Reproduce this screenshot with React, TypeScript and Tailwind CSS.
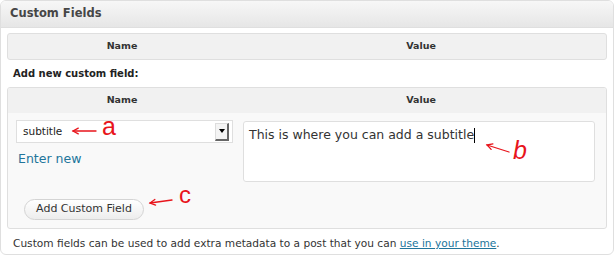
import React from "react";

const font = { fontFamily: '"DejaVu Sans", "Lucida Grande", Verdana, sans-serif' };

function Arrow({ x1, y1, x2, y2 }: { x1: number; y1: number; x2: number; y2: number }) {
  const ang = Math.atan2(y2 - y1, x2 - x1);
  const len = 6;
  const spread = 0.5;
  const ax = x1 + len * Math.cos(ang + spread);
  const ay = y1 + len * Math.sin(ang + spread);
  const bx = x1 + len * Math.cos(ang - spread);
  const by = y1 + len * Math.sin(ang - spread);
  return (
    <g stroke="#e8141b" strokeWidth={1.3} fill="none" strokeLinecap="round">
      <line x1={x1} y1={y1} x2={x2} y2={y2} />
      <polyline points={`${ax},${ay} ${x1},${y1} ${bx},${by}`} />
    </g>
  );
}

export default function App() {
  return (
    <div className="relative w-[614px] h-[256px] bg-white" style={font}>
      <div className="w-[614px] h-[255px] border border-[#dfdfdf] rounded-[6px] overflow-hidden flex flex-col bg-white">
        <div className="h-[27px] shrink-0 bg-gradient-to-b from-[#f7f7f7] to-[#e6e6e6] border-b border-[#dfdfdf] pl-[9px] flex items-center text-[11.5px] font-bold text-[#464646]">
          Custom Fields
        </div>
        <div className="px-[6px] pt-[5px]">
          <div className="h-[27px] rounded-[3px] border border-[#dfdfdf] bg-[#f1f1f1] flex items-center text-[9.5px] font-bold text-[#333]">
            <div className="w-[228px] text-center">Name</div>
            <div className="flex-1 text-center">Value</div>
          </div>
          <div className="h-[27px] flex items-center pl-[6px] text-[10px] font-bold text-[#222]">
            Add new custom field:
          </div>
          <div className="rounded-[3px] border border-[#dfdfdf] bg-[#f9f9f9] overflow-hidden">
            <div className="h-[25px] bg-[#f1f1f1] flex items-center text-[9.5px] font-bold text-[#333]">
              <div className="w-[228px] text-center">Name</div>
              <div className="flex-1 text-center">Value</div>
            </div>
            <div className="flex h-[115px]">
              <div className="w-[228px] pl-[8px] pt-[7px] flex flex-col">
                <div className="w-[217px] h-[23px] bg-white border border-[#dfdfdf] flex items-center pl-[6px] text-[10.5px] text-[#222]">
                  <span className="flex-1">subtitle</span>
                  <div className="w-[14px] h-[18px] mr-[3px] bg-[#f4f4f4] border-r-2 border-b-2 border-r-[#666] border-b-[#666] border-l border-t border-l-[#ddd] border-t-[#ddd] flex items-center justify-center">
                    <div className="w-0 h-0 border-l-[3px] border-r-[3px] border-t-[4px] border-l-transparent border-r-transparent border-t-black" />
                  </div>
                </div>
                <div className="mt-[8px] pl-[2px] text-[12.5px] text-[#21759b] leading-[16px]">Enter new</div>
                <div className="mt-[32px] ml-[8px] w-[120px] h-[21px] rounded-full border border-[#d4d4d4] bg-gradient-to-b from-white to-[#ededed] flex items-center justify-center text-[11px] text-[#333]">
                  Add Custom Field
                </div>
              </div>
              <div className="flex-1 pl-[7px] pt-[8px] pr-[11px]">
                <div className="h-[61px] rounded-[3px] border border-[#dfdfdf] bg-white px-[5px] pt-[4px] text-[12.5px] text-[#333] leading-[18px]">
                  This is where you can add a subtitle
                  <span className="inline-block w-px h-[15px] bg-black align-middle" />
                </div>
              </div>
            </div>
          </div>
          <div className="pl-[6px] pt-[7px] text-[10.6px] text-[#333]">
            Custom fields can be used to add extra metadata to a post that you can{" "}
            <span className="text-[#21759b] underline">use in your theme</span>.
          </div>
        </div>
      </div>
      <svg className="absolute left-0 top-0 pointer-events-none" width={614} height={256}>
        <Arrow x1={73} y1={131} x2={96} y2={131} />
        <Arrow x1={487} y1={145} x2={509} y2={152} />
        <Arrow x1={150} y1={203} x2={172} y2={200} />
      </svg>
      <span className="absolute left-[102px] top-[111px] text-[25px] leading-[30px] text-[#e8141b]" style={{ fontFamily: '"Liberation Sans", Arial, sans-serif' }}>a</span>
      <span className="absolute left-[513px] top-[135px] text-[25px] leading-[30px] italic text-[#e8141b]" style={{ fontFamily: '"Liberation Sans", Arial, sans-serif' }}>b</span>
      <span className="absolute left-[179px] top-[180px] text-[24px] leading-[30px] text-[#e8141b]" style={{ fontFamily: '"Liberation Sans", Arial, sans-serif' }}>c</span>
    </div>
  );
}
